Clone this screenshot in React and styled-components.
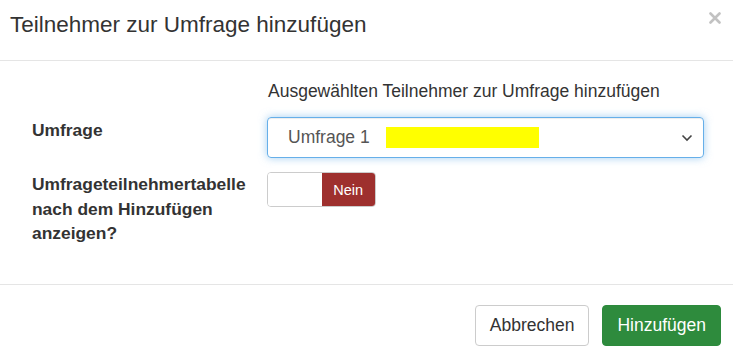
import React from "react";
import styled, { createGlobalStyle } from "styled-components";

const Global = createGlobalStyle`
  html, body { margin: 0; padding: 0; background: #fff; }
  body { font-family: "Liberation Sans", Arial, sans-serif; color: #333; }
  * { box-sizing: border-box; }
`;

const Modal = styled.div`
  width: 733px;
  height: 353px;
  display: flex;
  flex-direction: column;
  background: #fff;
`;

const Header = styled.div`
  height: 61px;
  border-bottom: 1px solid #e5e5e5;
  display: flex;
  align-items: flex-start;
  justify-content: space-between;
  padding: 10px 12px 0 10px;
`;

const Title = styled.h4`
  margin: 0;
  font-size: 22.5px;
  font-weight: normal;
  line-height: 30px;
  color: #333;
`;

const Close = styled.svg`
  margin-top: 2px;
`;

const Body = styled.div`
  flex: 1;
  padding: 18px 29px 0 32px;
  display: grid;
  grid-template-columns: 235px 1fr;
  row-gap: 14px;
  align-content: start;
`;

const Help = styled.div`
  grid-column: 2;
  font-size: 17.5px;
  line-height: 24px;
  padding-left: 1px;
`;

const Label = styled.label`
  font-size: 17.4px;
  font-weight: bold;
  line-height: 24.5px;
  padding-top: ${(p) => p.$pt || 0}px;
  color: #333;
`;

const SelectBox = styled.div`
  height: 41px;
  border: 1px solid #66afe9;
  border-radius: 4px;
  box-shadow: inset 0 1px 1px rgba(0,0,0,.075), 0 0 8px rgba(102,175,233,.6);
  display: flex;
  align-items: center;
  padding: 0 10px 0 20px;
  font-size: 17.5px;
  color: #555;
`;

const Highlight = styled.span`
  display: inline-block;
  width: 153px;
  height: 21px;
  background: #ffff00;
  margin-left: 16px;
`;

const Chevron = styled.svg`
  margin-left: auto;
`;

const Toggle = styled.div`
  width: 109px;
  height: 35px;
  border: 1px solid #ccc;
  border-radius: 4px;
  display: flex;
  overflow: hidden;
`;

const ToggleHalf = styled.div`
  flex: 1;
  background: ${(p) => (p.$on ? "#9e302e" : "#fff")};
  color: #fff;
  font-size: 14.5px;
  display: flex;
  align-items: center;
  justify-content: center;
`;

const Footer = styled.div`
  height: 69px;
  border-top: 1px solid #e5e5e5;
  display: flex;
  justify-content: flex-end;
  align-items: flex-start;
  gap: 13px;
  padding: 20px 12px 0 0;
`;

const Button = styled.button`
  height: 41px;
  padding: 0 14px;
  font-family: "Liberation Sans", Arial, sans-serif;
  font-size: 17.5px;
  border-radius: 4px;
  border: 1px solid ${(p) => (p.$primary ? "#2c8a3c" : "#ccc")};
  background: ${(p) => (p.$primary ? "#2e8b3d" : "#fff")};
  color: ${(p) => (p.$primary ? "#fff" : "#333")};
`;

export default function App() {
  return (
    <>
      <Global />
      <Modal>
        <Header>
          <Title>Teilnehmer zur Umfrage hinzufügen</Title>
          <Close width="12" height="12" viewBox="0 0 12 12" aria-label="Schließen">
            <path d="M1.5 1.5 L10.5 10.5 M10.5 1.5 L1.5 10.5" stroke="#c2c2c2" strokeWidth="2.6" strokeLinecap="round" />
          </Close>
        </Header>
        <Body>
          <Help>Ausgewählten Teilnehmer zur Umfrage hinzufügen</Help>
          <Label $pt={1}>Umfrage</Label>
          <SelectBox>
            Umfrage 1
            <Highlight />
            <Chevron width="12" height="8" viewBox="0 0 12 8">
              <path d="M1.5 1.5 L6 6 L10.5 1.5" fill="none" stroke="#444" strokeWidth="1.6" />
            </Chevron>
          </SelectBox>
          <Label $pt={0}>
            Umfrageteilnehmertabelle
            <br />
            nach dem Hinzufügen
            <br />
            anzeigen?
          </Label>
          <div>
            <Toggle>
              <ToggleHalf />
              <ToggleHalf $on>Nein</ToggleHalf>
            </Toggle>
          </div>
        </Body>
        <Footer>
          <Button>Abbrechen</Button>
          <Button $primary>Hinzufügen</Button>
        </Footer>
      </Modal>
    </>
  );
}
